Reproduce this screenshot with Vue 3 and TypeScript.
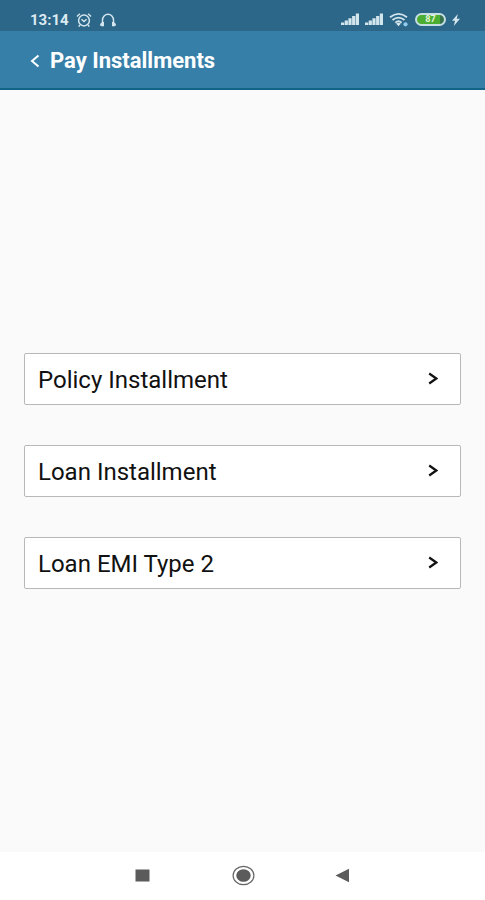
<script setup lang="ts">
interface InstallmentOption {
  id: string
  label: string
}

const options: InstallmentOption[] = [
  { id: 'policy', label: 'Policy Installment' },
  { id: 'loan', label: 'Loan Installment' },
  { id: 'emi', label: 'Loan EMI Type 2' },
]
</script>

<template>
  <div class="screen">
    <div class="status">
      <div class="status-group">
        <span class="time">13:14</span>
        <svg class="alarm" width="16" height="16" viewBox="0 0 16 16" aria-hidden="true">
          <circle cx="8" cy="8.5" r="5.4" />
          <path d="M1 4.5 3.8 1.8M15 4.5 12.2 1.8M5.500 7.200 8 9.500l2.600-2.200M4 13l-1.300 1.600M12 13l1.300 1.600" />
        </svg>
        <svg class="headset" width="18" height="16" viewBox="0 0 18 16" aria-hidden="true">
          <path d="M3.500 11.500V8a5.500 5.800 0 0 1 11 0v3.500" />
          <path class="pads" d="M5 10v4.200H2.600Q1 14.200 1 12.600 1 11 2.600 11V10zM13 10v4.200h2.400q1.600 0 1.600-1.600 0-1.600-1.600-1.600V10z" />
        </svg>
      </div>
      <div class="status-group right">
        <svg v-for="n in 2" :key="n" class="signal" width="18" height="13" viewBox="0 0 18 13" aria-hidden="true">
          <path d="M0 9.500h3.200V12H0zM3.700 7.500h3.200V12H3.700zM7.400 5.300h3.200V12H7.400zM11.100 3h3.200v9h-3.200zM14.800 .500H18V12h-3.200z" />
        </svg>
        <svg class="wifi" width="20" height="15" viewBox="0 0 20 15" aria-hidden="true">
          <path d="M1 5.300Q9.500-1.500 18 5.300M3.500 8q6-4.700 12 0M6.300 10.600q3.200-2.600 6.400 0" />
          <path class="solid" d="m7 11.500 2.500 2.700 2.500-2.700q-2.500-1.700-5 0z" />
          <circle class="dot" cx="16.500" cy="12.300" r="2.100" />
        </svg>
        <span class="battery">87</span>
        <svg class="bolt" width="8" height="12" viewBox="0 0 8 12" aria-hidden="true">
          <path d="M5.800 0 0 6.800h3L1.800 12 8 4.800H4.800z" />
        </svg>
      </div>
    </div>

    <header class="bar">
      <button class="back" type="button" aria-label="Back">
        <svg width="10" height="14" viewBox="0 0 10 14" aria-hidden="true">
          <path d="M8.500 1.500 2 7l6.500 5.500" />
        </svg>
      </button>
      <h1 class="title">Pay Installments</h1>
    </header>

    <main class="content">
      <button v-for="option in options" :key="option.id" class="option" type="button">
        <span class="label">{{ option.label }}</span>
        <svg width="10" height="14" viewBox="0 0 10 14" aria-hidden="true">
          <path d="M1.200 1.500 8.300 6.500l-7.100 5" />
        </svg>
      </button>
    </main>

    <nav class="keys">
      <button type="button" aria-label="Recent apps">
        <svg width="24" height="24" viewBox="0 0 24 24" aria-hidden="true">
          <rect x="4.500" y="5.500" width="14" height="12" />
        </svg>
      </button>
      <button type="button" aria-label="Home">
        <svg width="24" height="24" viewBox="0 0 24 24" aria-hidden="true">
          <ellipse class="ring" cx="12.500" cy="11.500" rx="10.400" ry="9.200" />
          <ellipse cx="12.500" cy="11.500" rx="7.200" ry="6.300" />
        </svg>
      </button>
      <button type="button" aria-label="Back">
        <svg width="24" height="24" viewBox="0 0 24 24" aria-hidden="true">
          <path d="M4.500 11.500 18 4.800v13.400z" />
        </svg>
      </button>
    </nav>
  </div>
</template>

<style>
body {
  background: #fafafa;
}
</style>

<style scoped>
.screen {
  display: flex;
  flex-direction: column;
  min-height: 100vh;
  background: #fafafa;
  font-family: Roboto, "Liberation Sans", sans-serif;
}

button {
  margin: 0;
  padding: 0;
  border: 0;
  background: none;
  font: inherit;
  color: inherit;
}

svg {
  display: block;
  flex: none;
}

.status {
  display: flex;
  justify-content: space-between;
  align-items: center;
  box-sizing: border-box;
  height: 31px;
  padding: 8px 25px 0 30px;
  background: #2c6688;
  color: #dcebf2;
}

.status-group {
  display: flex;
  align-items: center;
  gap: 7px;
}

.right {
  gap: 6px;
}

.time {
  font-size: 15px;
  line-height: 16px;
  font-weight: 700;
}

.alarm,
.headset,
.wifi {
  fill: none;
  stroke: #d3e5ed;
  stroke-width: 1.5;
}

.wifi {
  stroke-width: 1.8;
}

.headset .pads,
.wifi .solid,
.signal,
.bolt {
  fill: #d3e5ed;
  stroke: none;
}

.wifi .dot {
  fill: #91cdf0;
  stroke: none;
}

.battery {
  box-sizing: border-box;
  width: 31px;
  height: 13px;
  border: 2px solid #c5dfe3;
  border-radius: 7px;
  background: linear-gradient(to right, #4bad32 85%, #38734d 85%);
  color: #e4f5d8;
  font-size: 9px;
  line-height: 9px;
  font-weight: 700;
  text-align: center;
}

.bar {
  display: flex;
  align-items: center;
  gap: 10px;
  box-sizing: border-box;
  height: 59px;
  padding: 2px 30px 0;
  border-bottom: 2px solid #126589;
  background: #367fa9;
  color: #fff;
}

.back svg {
  fill: none;
  stroke: #fff;
  stroke-width: 2;
}

.title {
  margin: 0;
  font-size: 22px;
  line-height: 28px;
  font-weight: 700;
}

.content {
  flex: 1;
  display: flex;
  flex-direction: column;
  justify-content: center;
  gap: 40px;
  padding: 0 24px;
}

.option {
  display: flex;
  justify-content: space-between;
  align-items: center;
  height: 52px;
  padding: 0 22px 0 13px;
  border: 1px solid #b8b8b8;
  border-radius: 2px;
  background: #fff;
  color: #111;
  font-size: 24px;
  line-height: 28px;
  text-align: left;
}

.label {
  padding-top: 2px;
}

.option svg {
  fill: none;
  stroke: #111;
  stroke-width: 2.2;
}

.keys {
  display: flex;
  justify-content: center;
  align-items: center;
  gap: 76px;
  height: 48px;
  background: #fff;
  fill: #5b5b5b;
}

.keys .ring {
  fill: none;
  stroke: #666;
  stroke-width: 1.2;
}
</style>
